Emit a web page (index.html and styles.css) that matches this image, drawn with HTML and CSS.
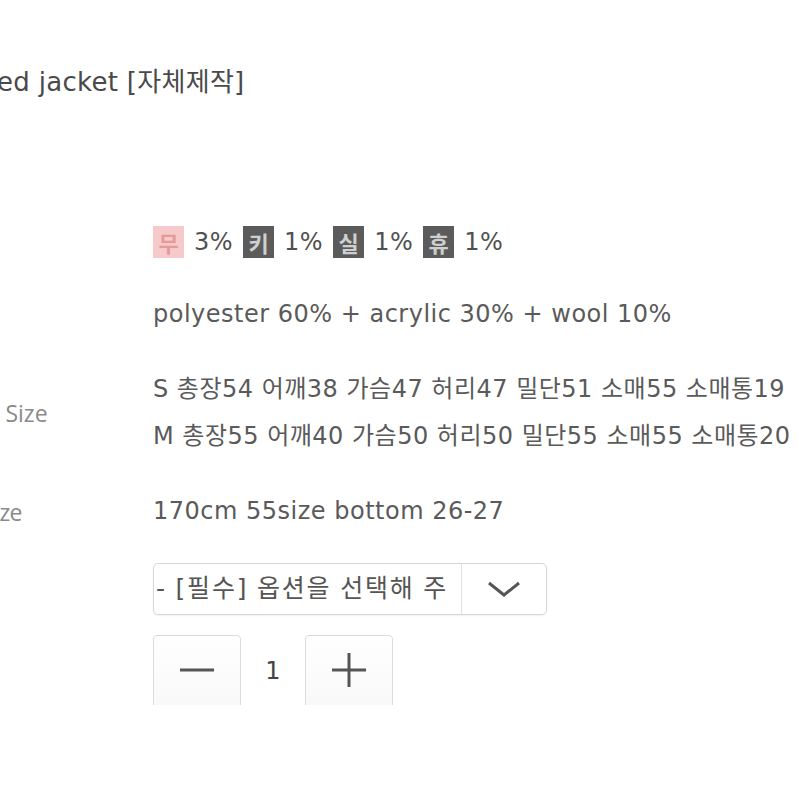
FILE: index.html
```html
<!DOCTYPE html>
<html lang="ko">
  <head>
    <meta charset="UTF-8" />
    <meta name="viewport" content="width=device-width, initial-scale=1.0" />
    <title>Jacket</title>
    <link rel="stylesheet" href="styles.css">
  </head>
  <body>
    <div class="page">
      <h1 class="title">ed jacket [자체제작]</h1>

      <div class="info">
        <div class="row row-color">
          <div class="label">Color</div>
          <div class="value colors">
            <span class="chip chip-pink">무</span><span class="pct">3%</span>
            <span class="chip">키</span><span class="pct">1%</span>
            <span class="chip">실</span><span class="pct">1%</span>
            <span class="chip">휴</span><span class="pct">1%</span>
          </div>
        </div>

        <div class="row">
          <div class="label">Fabric</div>
          <div class="value">polyester 60% + acrylic 30% + wool 10%</div>
        </div>

        <div class="row">
          <div class="label">Product Size</div>
          <div class="value">
            <p>S 총장54 어깨38 가슴47 허리47 밀단51 소매55 소매통19</p>
            <p>M 총장55 어깨40 가슴50 허리50 밀단55 소매55 소매통20</p>
          </div>
        </div>

        <div class="row">
          <div class="label label-tight">Model Size</div>
          <div class="value">170cm 55size bottom 26-27</div>
        </div>
      </div>

      <div class="option">
        <div class="option-text"><span>- [필수] 옵션을 선택해 주세요 -</span></div>
        <div class="option-arrow">
          <svg width="34" height="16" viewBox="0 0 34 16">
            <polyline points="2,2 17,14 32,2" fill="none" stroke="#555" stroke-width="3" />
          </svg>
        </div>
      </div>

      <div class="qty">
        <button class="qty-btn" type="button">
          <svg width="36" height="36" viewBox="0 0 36 36">
            <line x1="1" y1="18" x2="35" y2="18" stroke="#555" stroke-width="3" />
          </svg>
        </button>
        <span class="qty-num">1</span>
        <button class="qty-btn" type="button">
          <svg width="36" height="36" viewBox="0 0 36 36">
            <line x1="1" y1="18" x2="35" y2="18" stroke="#555" stroke-width="3" />
            <line x1="18" y1="1" x2="18" y2="35" stroke="#555" stroke-width="3" />
          </svg>
        </button>
      </div>
    </div>
  </body>
</html>
```

FILE: styles.css
```css
* {
  box-sizing: border-box;
  margin: 0;
  padding: 0;
}

body {
  font-family: "DejaVu Sans", "Noto Sans CJK KR", sans-serif;
  background: white;
  color: #5a5a5a;
  overflow: hidden;
  width: 799px;
  height: 799px;
}

.page {
  padding-top: 62px;
}

.title {
  font-size: 26px;
  font-weight: normal;
  letter-spacing: 0.3px;
  line-height: 40px;
  color: #4a4a4a;
  margin-left: -3px;
  white-space: nowrap;
}

.info {
  margin-top: 119px;
  margin-left: -85px;
  display: flex;
  flex-direction: column;
  gap: 28px;
}

.row {
  display: flex;
  align-items: center;
}

.label {
  width: 238px;
  flex-shrink: 0;
  font-family: "Open Sans", sans-serif;
  font-size: 23px;
  color: #8a8a8a;
  white-space: nowrap;
}

.label-tight {
  letter-spacing: -0.9px;
}

.value {
  font-size: 24px;
  letter-spacing: 0.5px;
  line-height: 47px;
  white-space: nowrap;
}

.colors {
  display: flex;
  align-items: center;
  height: 42px;
  line-height: 42px;
}

.chip {
  width: 31px;
  height: 32px;
  display: flex;
  align-items: center;
  justify-content: center;
  font-family: "Noto Sans CJK KR", sans-serif;
  font-size: 22px;
  font-weight: bold;
  letter-spacing: 0;
  background: #5b5b5b;
  color: #cfcfcf;
}

.chip-pink {
  background: #f6caca;
  color: #e59a9a;
}

.pct {
  margin: 0 10px;
  color: #505050;
}

.option {
  margin-top: 28px;
  margin-left: 153px;
  width: 394px;
  height: 52px;
  display: flex;
  border: 1px solid #d6d6d6;
  border-radius: 5px;
  box-shadow: 0 1px 2px rgba(0, 0, 0, 0.06);
}

.option-text {
  width: 308px;
  padding: 0 14px 0 2px;
  border-right: 1px solid #e0e0e0;
}

.option-text span {
  display: block;
  font-size: 25px;
  letter-spacing: 1.8px;
  word-spacing: -1px;
  line-height: 50px;
  white-space: nowrap;
  overflow: hidden;
  color: #555;
}

.option-arrow {
  flex: 1;
  display: flex;
  align-items: center;
  justify-content: center;
}

.qty {
  margin-top: 20px;
  margin-left: 153px;
  height: 70px;
  overflow: hidden;
  display: flex;
  align-items: flex-start;
}

.qty-btn {
  width: 88px;
  height: 90px;
  padding-bottom: 20px;
  border: 1px solid #dcdcdc;
  border-radius: 4px;
  background: linear-gradient(#ffffff, #f7f7f7);
  display: flex;
  align-items: center;
  justify-content: center;
}

.qty-num {
  width: 64px;
  text-align: center;
  font-size: 24px;
  line-height: 72px;
  color: #444;
}
```
